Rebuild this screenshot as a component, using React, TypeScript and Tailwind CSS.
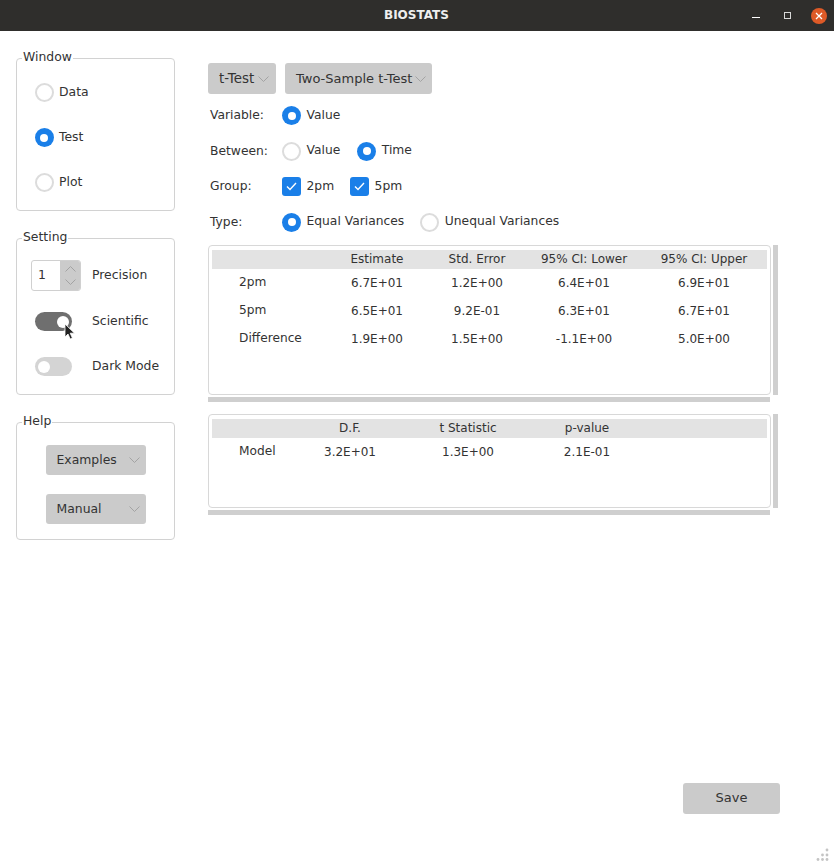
import React from "react";

function Chevron({ className = "" }: { className?: string }) {
  return (
    <svg width="11" height="6" viewBox="0 0 11 6" fill="none" className={className}>
      <path d="M0.5 0.5l5 5 5-5" stroke="#a3a3a3" strokeWidth="1" />
    </svg>
  );
}

function Radio({ checked = false, label, className = "" }: { checked?: boolean; label: string; className?: string }) {
  return (
    <div className={`flex items-center gap-[5.5px] ${className}`}>
      {checked ? (
        <span className="flex h-[19px] w-[19px] shrink-0 items-center justify-center rounded-full bg-[#1a7fe8]">
          <span className="h-[8px] w-[8px] rounded-full bg-white" />
        </span>
      ) : (
        <span className="h-[19px] w-[19px] shrink-0 rounded-full border-2 border-[#dcdcdc] bg-white" />
      )}
      <span className="pb-[1px] leading-none">{label}</span>
    </div>
  );
}

function Check({ label }: { label: string }) {
  return (
    <div className="flex items-center gap-[5.5px]">
      <span className="flex h-[19px] w-[19px] shrink-0 items-center justify-center rounded-[3px] bg-[#1a7fe8]">
        <svg width="11" height="9" viewBox="0 0 11 9" fill="none">
          <path d="M1 4.5l3 3 6-6.5" stroke="#fff" strokeWidth="1.4" />
        </svg>
      </span>
      <span className="pb-[1px] leading-none">{label}</span>
    </div>
  );
}

function Toggle({ on = false }: { on?: boolean }) {
  return (
    <span
      className={`flex h-[19px] w-[37px] shrink-0 items-center rounded-full px-[3px] ${
        on ? "justify-end bg-[#6f6f6f]" : "justify-start bg-[#d4d4d4]"
      }`}
    >
      <span className="h-[12px] w-[12px] rounded-full bg-white" />
    </span>
  );
}

function Group({ title, className = "", children }: { title: string; className?: string; children: React.ReactNode }) {
  return (
    <div className={`relative w-[159px] rounded-[4px] border border-[#d2d2d2] ${className}`}>
      <span className="absolute left-[5px] top-[-8px] bg-white px-[1px] leading-none">{title}</span>
      {children}
    </div>
  );
}

function Drop({ label, className = "" }: { label: string; className?: string }) {
  return (
    <div className={`flex items-center rounded-[3px] bg-[#cbcbcb] ${className}`}>
      <span className="leading-none">{label}</span>
      <Chevron className="shrink-0" />
    </div>
  );
}

const t1 = [
  ["2pm", "6.7E+01", "1.2E+00", "6.4E+01", "6.9E+01"],
  ["5pm", "6.5E+01", "9.2E-01", "6.3E+01", "6.7E+01"],
  ["Difference", "1.9E+00", "1.5E+00", "-1.1E+00", "5.0E+00"],
];

function Row({ cells, grid, header = false }: { cells: string[]; grid: string; header?: boolean }) {
  return (
    <div className={`grid ${grid} items-center text-[12px] ${header ? "h-[19px] bg-[#e3e3e3]" : "h-[28px]"}`}>
      {cells.map((c, i) => (
        <span key={i} className={i === 0 ? "pl-[27px] text-[12.2px]" : "text-center"}>
          {c}
        </span>
      ))}
    </div>
  );
}

function ScrollTable({ height, children }: { height: string; children: React.ReactNode }) {
  return (
    <div className="grid grid-cols-[563px_5px] grid-rows-[auto_5px] gap-x-[2px] gap-y-[2px]">
      <div className={`rounded-[4px] border border-[#d8d8d8] px-[3px] pt-[4px] ${height}`}>{children}</div>
      <div className="bg-[#cfcfcf]" />
      <div className="w-[562px] bg-[#cfcfcf]" />
    </div>
  );
}

export default function App() {
  const g1 = "grid-cols-[110px_110px_90px_124px_116px]";
  const g2 = "grid-cols-[100px_76px_160px_78px]";
  return (
    <div
      className="relative flex h-[866px] w-[834px] flex-col overflow-hidden bg-white text-[12.3px] text-[#333333]"
      style={{ fontFamily: '"DejaVu Sans", sans-serif' }}
    >
      <header className="flex h-[31px] shrink-0 items-center bg-[#2f2e2c] pl-[384px] pr-[7px]">
        <span className="pb-[2px] text-[12px] font-bold text-[#eeeeee]">BIOSTATS</span>
        <div className="ml-auto flex items-center">
          <span className="mt-[4px] h-[1.5px] w-[8px] bg-white" />
          <span className="ml-[24px] h-[7px] w-[7px] border border-[#d8d8d8]" />
          <span className="ml-[20px] flex h-[16px] w-[16px] items-center justify-center rounded-full bg-[#de5a27]">
            <svg width="8" height="8" viewBox="0 0 8 8" fill="none">
              <path d="M1 1l6 6M7 1L1 7" stroke="#fff" strokeWidth="1.3" />
            </svg>
          </span>
        </div>
      </header>

      <div className="flex flex-1">
        <aside className="flex w-[192px] shrink-0 flex-col gap-[27px] pl-[16px] pt-[27px] text-[12.4px]">
          <Group title="Window" className="h-[153px]">
            <div className="flex flex-col gap-[26px] pl-[17.500px] pt-[24px]">
              <Radio label="Data" />
              <Radio checked label="Test" />
              <Radio label="Plot" />
            </div>
          </Group>

          <Group title="Setting" className="h-[157px]">
            <div className="grid grid-cols-[75px_1fr] items-center pt-[21px]">
              <div className="ml-[14px] flex h-[31px] w-[50px] overflow-hidden rounded-[3px] border border-[#d0d0d0]">
                <span className="flex flex-1 items-center pl-[6px]">1</span>
                <span className="flex w-[20px] flex-col items-center justify-center gap-[7px] bg-[#cbcbcb]">
                  <Chevron className="rotate-180" />
                  <Chevron />
                </span>
              </div>
              <span className="pb-[1px]">Precision</span>
              <div className="ml-[18px] mt-[21px] flex">
                <Toggle on />
              </div>
              <span className="mt-[21px]">Scientific</span>
              <div className="ml-[18px] mt-[26px] flex">
                <Toggle />
              </div>
              <span className="mt-[26px] pb-[1px]">Dark Mode</span>
            </div>
          </Group>

          <Group title="Help" className="h-[118px]">
            <div className="flex flex-col items-center gap-[19px] pt-[22px]">
              <Drop label="Examples" className="h-[30px] w-[100px] justify-between pl-[11px] pr-[6px]" />
              <Drop label="Manual" className="h-[30px] w-[100px] justify-between pl-[11px] pr-[6px]" />
            </div>
          </Group>
        </aside>

        <main className="flex flex-1 flex-col pl-[16px] pt-[32px]">
          <div className="flex gap-[9px] text-[13px]">
            <Drop label="t-Test" className="h-[31px] w-[68px] gap-[4px] pl-[11px] text-[13.400px]" />
            <Drop label="Two-Sample t-Test" className="h-[31px] w-[147px] gap-[3px] pl-[11px]" />
          </div>

          <div className="mt-[12px] grid grid-cols-[72px_auto_1fr] items-center gap-y-[16.5px] pl-[2px]">
            <span>Variable:</span>
            <Radio checked label="Value" />
            <span />
            <span>Between:</span>
            <div className="col-span-2 flex gap-[17px]">
              <Radio label="Value" />
              <Radio checked label="Time" />
            </div>
            <span>Group:</span>
            <div className="col-span-2 flex gap-[16px]">
              <Check label="2pm" />
              <Check label="5pm" />
            </div>
            <span>Type:</span>
            <div className="col-span-2 flex gap-[16px]">
              <Radio checked label="Equal Variances" />
              <Radio label="Unequal Variances" />
            </div>
          </div>

          <div className="mt-[13px] flex flex-col gap-[12px]">
            <ScrollTable height="h-[150px]">
              <Row header grid={g1} cells={["", "Estimate", "Std. Error", "95% CI: Lower", "95% CI: Upper"]} />
              {t1.map((r) => (
                <Row key={r[0]} grid={g1} cells={r} />
              ))}
            </ScrollTable>
            <ScrollTable height="h-[94px]">
              <Row header grid={g2} cells={["", "D.F.", "t Statistic", "p-value"]} />
              <Row grid={g2} cells={["Model", "3.2E+01", "1.3E+00", "2.1E-01"]} />
            </ScrollTable>
          </div>

          <div className="mb-[52px] mt-auto flex justify-end pr-[54px]">
            <button className="h-[31px] w-[97px] rounded-[3px] bg-[#cbcbcb] pb-[1px] text-center text-[13px]">Save</button>
          </div>
        </main>
      </div>

      {/* mouse cursor over the toggle */}
      <svg width="12" height="18" viewBox="0 0 12 18" className="absolute left-[64px] top-[323px]">
        <path d="M1 1v13l3-3 2.2 5 2.2-1-2.2-4.8H10.500z" fill="#222" stroke="#fff" strokeWidth="0.8" />
      </svg>

      {/* resize grip */}
      <svg width="14" height="14" viewBox="0 0 14 14" className="absolute bottom-[4px] right-[4px]">
        {[
          [11, 2],
          [6.5, 7],
          [11, 7],
          [2, 11.5],
          [6.5, 11.5],
          [11, 11.5],
        ].map(([x, y], i) => (
          <circle key={i} cx={x} cy={y} r="1.4" fill="#c4c4c4" />
        ))}
      </svg>
    </div>
  );
}
